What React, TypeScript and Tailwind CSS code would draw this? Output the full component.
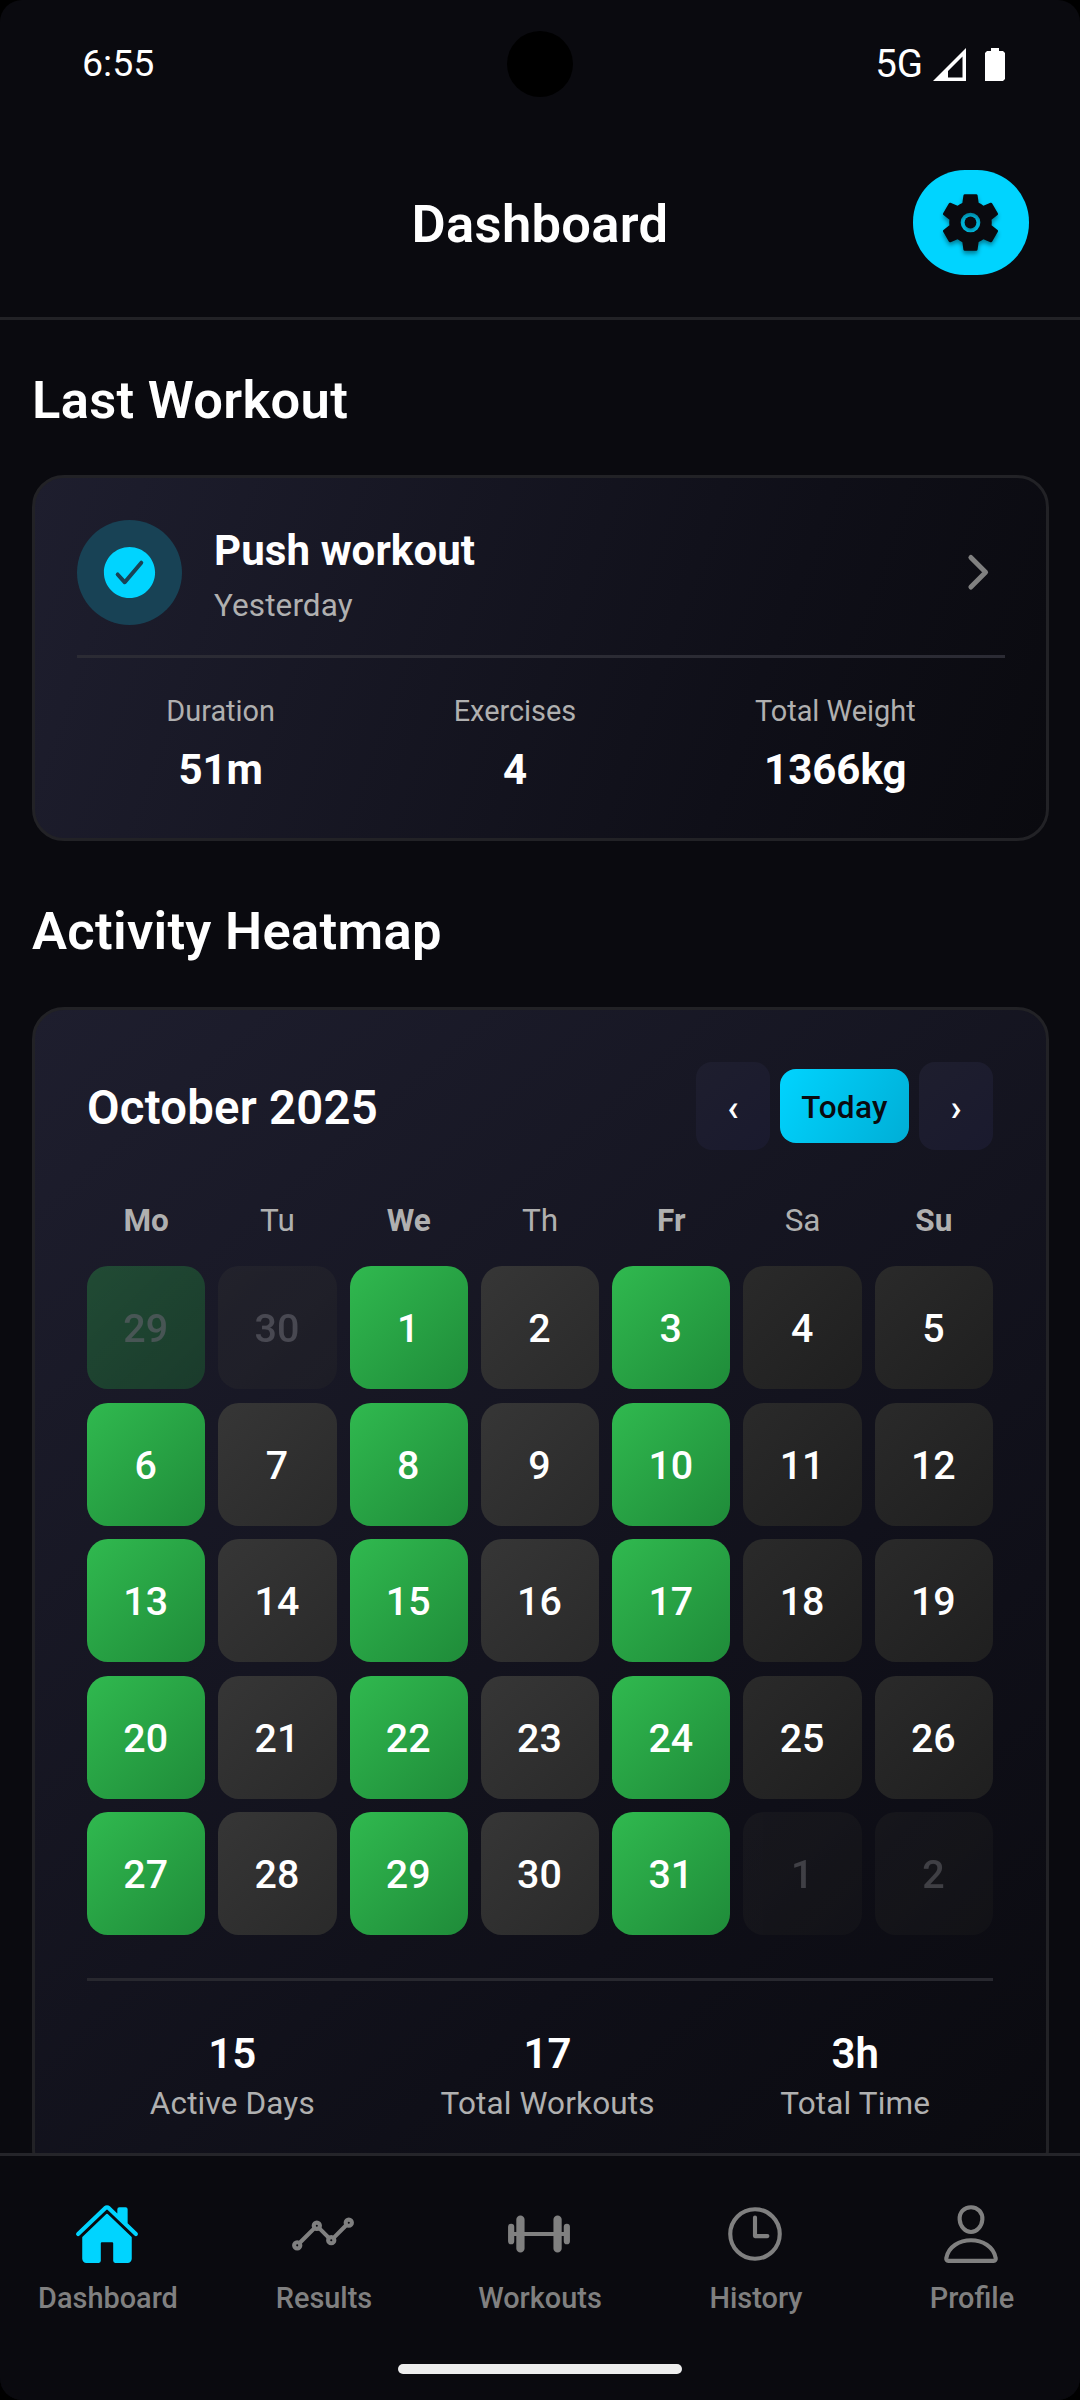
import type { ReactNode } from "react";
import {
  IoAnalyticsOutline,
  IoBarbellOutline,
  IoCheckmarkCircle,
  IoChevronForward,
  IoHome,
  IoPersonOutline,
  IoTimeOutline,
} from "react-icons/io5";

type DayKind = "active" | "rest" | "weekend";

interface Day {
  label: number;
  kind: DayKind;
  outside?: boolean;
}

const WEEKDAYS = ["Mo", "Tu", "We", "Th", "Fr", "Sa", "Su"];

// Mo, We and Fr are the training days of this plan
function buildDays(): Day[] {
  const days: Day[] = [];
  for (let i = 0; i < 35; i++) {
    const col = i % 7;
    const date = i - 1;
    let label = date;
    if (date < 1) label = date + 30;
    if (date > 31) label = date - 31;
    const kind: DayKind = col > 4 ? "weekend" : col % 2 === 0 ? "active" : "rest";
    days.push({ label, kind, outside: date < 1 || date > 31 });
  }
  return days;
}

function dayColor(kind: DayKind): string {
  switch (kind) {
    case "active": return "bg-[linear-gradient(136deg,#30b94f,#1f8b39)]";
    case "rest": return "bg-[linear-gradient(136deg,#363636,#2a2a2a)]";
    default: return "bg-[linear-gradient(136deg,#2a2a2a,#1f1f1f)]";
  }
}

function GearIcon({ className }: { className?: string }) {
  return (
    <svg className={className} viewBox="0 0 512 512" fill="currentColor">
      <circle cx="256" cy="256" r="48" />
      <path
        fillRule="evenodd"
        d="M256 176a80 80 0 1 0 80 80 80.24 80.24 0 0 0-80-80zm172.72 80a165.53 165.53 0 0 1-1.64 22.34l48.69 38.15a11.59 11.59 0 0 1 2.63 14.78l-46.06 79.52a11.64 11.64 0 0 1-14.14 4.93l-57.25-23a176.56 176.56 0 0 1-38.82 22.67l-8.56 60.78a11.93 11.93 0 0 1-11.51 9.86h-92.12a12 12 0 0 1-11.51-9.53l-8.56-60.78A169.3 169.3 0 0 1 151.05 393L93.8 416a11.64 11.64 0 0 1-14.14-4.92L33.6 331.57a11.59 11.59 0 0 1 2.63-14.78l48.69-38.15A174.58 174.58 0 0 1 83.28 256a165.53 165.53 0 0 1 1.64-22.34l-48.69-38.15a11.59 11.59 0 0 1-2.63-14.78l46.06-79.52a11.64 11.64 0 0 1 14.14-4.93l57.25 23a176.56 176.56 0 0 1 38.82-22.67l8.56-60.78A11.93 11.93 0 0 1 209.94 26h92.12a12 12 0 0 1 11.51 9.53l8.56 60.78A169.3 169.3 0 0 1 361 119l57.2-23a11.64 11.64 0 0 1 14.14 4.92l46.06 79.52a11.59 11.59 0 0 1-2.63 14.78l-48.69 38.15a174.58 174.58 0 0 1 1.64 22.63z"
      />
    </svg>
  );
}

function StatusBar() {
  return (
    <div className="relative flex h-[127px] shrink-0 items-center justify-between pt-[1px] pl-[82px] pr-[75px] text-white">
      <span className="text-[37.5px] leading-none">6:55</span>
      <div className="absolute left-[507px] top-[31px] size-[66px] rounded-full bg-black" />
      <div className="flex items-center">
        <span className="mr-[10px] text-[38.5px] leading-none">5G</span>
        <svg className="mr-[19px] h-[33px] w-[33px]" viewBox="0 0 33 33">
          <path fillRule="evenodd" fill="#fff" d="M33 0V33H0ZM29.5 8.5L15 23V29.5H29.5Z" />
        </svg>
        <svg className="h-[33px] w-[20px]" viewBox="0 0 20 33">
          <path fill="#fff" d="M6 0H14V3H18L20 5V31L18 33H0V5L2 3H6Z" />
        </svg>
      </div>
    </div>
  );
}

function Header() {
  return (
    <header className="relative flex h-[193px] shrink-0 items-center justify-center border-b-[3px] border-[#222226] pt-[5px]">
      <h1 className="text-[52.5px] leading-none font-semibold tracking-[0.3px]">Dashboard</h1>
      <button className="absolute right-[51px] top-[43px] flex h-[105px] w-[116px] items-center justify-center rounded-[52px] bg-[#00d4ff] text-[#0a0a0f]">
        <GearIcon className="mr-[1px] size-[63px] drop-shadow-[0_3px_2px_rgba(0,0,0,0.4)]" />
      </button>
    </header>
  );
}

function SectionTitle({ children }: { children: ReactNode }) {
  return <h2 className="text-[52.5px] leading-[62px] font-semibold tracking-[0.3px]">{children}</h2>;
}

function WorkoutStat({ label, value }: { label: string; value: string }) {
  return (
    <div className="flex flex-col items-center">
      <span className="text-[28.9px] leading-[34px] text-[#b0b0b0]">{label}</span>
      <span className="mt-[17px] text-[42px] leading-[50px] font-bold">{value}</span>
    </div>
  );
}

function LastWorkoutCard() {
  return (
    <div className="mt-[44px] h-[366px] rounded-[32px] border-[3px] border-[#222226] bg-[linear-gradient(109.8deg,#1e1e2e,#0f0f18_70%,#0a0a0f)] pt-[42px] pr-[41px] pl-[42px]">
      <div className="flex h-[105px] items-center">
        <div className="flex size-[105px] items-center justify-center rounded-full bg-[#184255]">
          <IoCheckmarkCircle className="size-[63px] text-[#00d4ff]" />
        </div>
        <div className="ml-[32px] flex-1 pt-[5px]">
          <p className="text-[42px] leading-[50px] font-bold tracking-[0.1px]">Push workout</p>
          <p className="mt-[11px] text-[31.5px] leading-[38px] tracking-[0.1px] text-[#b0b0b0]">Yesterday</p>
        </div>
        <IoChevronForward className="mr-[1px] size-[52.5px] text-[#808080]" />
      </div>
      <div className="mt-[30px] flex justify-around border-t-[3px] border-[#2b2b34] pt-[36px]">
        <WorkoutStat label="Duration" value="51m" />
        <WorkoutStat label="Exercises" value="4" />
        <WorkoutStat label="Total Weight" value="1366kg" />
      </div>
    </div>
  );
}

function HeatmapStat({ value, label }: { value: string; label: string }) {
  return (
    <div className="flex flex-col items-center">
      <span className="text-[42px] leading-[50px] font-semibold">{value}</span>
      <span className="text-[31.5px] leading-[50px] tracking-[0.15px] text-[#b0b0b0]">{label}</span>
    </div>
  );
}

function HeatmapCard() {
  const navButton =
    "flex h-[88px] w-[74px] items-center justify-center rounded-[16px] bg-[linear-gradient(140deg,#1e1e2e,#1a1a2e)] pt-[3px] text-[36.75px] font-semibold";
  return (
    <div className="mt-[45px] h-[1174px] shrink-0 rounded-[32px] border-[3px] border-[#222226] bg-[linear-gradient(139deg,#1e1e2e,#0f0f18_70%,#0a0a0f)] pt-[52px] pr-[53px] pl-[52px]">
      <div className="flex h-[88px] items-center justify-between">
        <h3 className="pt-[4px] text-[47.25px] font-semibold tracking-[0.25px]">October 2025</h3>
        <div className="flex items-center gap-[10px]">
          <button className={navButton}>‹</button>
          <button className="flex h-[74px] w-[129px] items-center justify-center rounded-[16px] bg-[linear-gradient(120deg,#00d4ff,#00aed6)] pt-[3px] text-[31.5px] font-medium tracking-[0.3px] text-[#0a0a0f]">
            Today
          </button>
          <button className={navButton}>›</button>
        </div>
      </div>

      <div className="mt-[52px] grid grid-cols-7 gap-x-[13px] text-center text-[31.5px] leading-[38px] text-[#b0b0b0]">
        {WEEKDAYS.map((day, i) => (
          <span key={day} className={i % 2 === 0 ? "font-bold" : ""}>{day}</span>
        ))}
      </div>

      <div className="mt-[26px] grid grid-cols-7 gap-x-[13px] gap-y-[13.5px]">
        {buildDays().map((day, i) => (
          <div
            key={i}
            className={`flex h-[123px] items-center justify-center rounded-[21px] pt-[3px] pr-[1px] text-[39.375px] font-medium ${dayColor(day.kind)} ${day.outside ? "opacity-30" : ""}`}
          >
            <span className={day.outside ? "text-white/65" : ""}>{day.label}</span>
          </div>
        ))}
      </div>

      <div className="mt-[43px] flex justify-around border-t-[3px] border-[#28282f] pt-[48px]">
        <HeatmapStat value="15" label="Active Days" />
        <HeatmapStat value="17" label="Total Workouts" />
        <HeatmapStat value="3h" label="Total Time" />
      </div>
    </div>
  );
}

const TABS = [
  { label: "Dashboard", Icon: IoHome, active: true },
  { label: "Results", Icon: IoAnalyticsOutline },
  { label: "Workouts", Icon: IoBarbellOutline },
  { label: "History", Icon: IoTimeOutline },
  { label: "Profile", Icon: IoPersonOutline },
];

function TabBar() {
  return (
    <nav className="h-[247px] shrink-0 border-t-[3px] border-[#25252a] bg-[#0a0a0f]">
      <div className="grid grid-cols-5 pt-[45px]">
        {TABS.map(({ label, Icon, active }) => (
          <div key={label} className="flex flex-col items-center text-[#808080]">
            <Icon className={`mr-[2px] size-[66px] ${active ? "text-[#00d4ff]" : ""}`} />
            <span className="mt-[13px] text-[28.9px] leading-[36px] font-medium">{label}</span>
          </div>
        ))}
      </div>
      <div className="mx-auto mt-[48px] h-[10px] w-[284px] rounded-full bg-[#ededed]" />
    </nav>
  );
}

export default function App() {
  return (
    <div className="h-[2400px] w-[1080px] bg-black">
      <div className="flex h-full flex-col overflow-hidden rounded-[22px] bg-[#0a0a0f] font-['Roboto',sans-serif] text-white">
        <StatusBar />
        <Header />
        <main className="min-h-0 flex-1 overflow-hidden pt-[49px] pr-[31px] pl-[32px]">
          <SectionTitle>Last Workout</SectionTitle>
          <LastWorkoutCard />
          <div className="mt-[59px]">
            <SectionTitle>Activity Heatmap</SectionTitle>
          </div>
          <HeatmapCard />
        </main>
        <TabBar />
      </div>
    </div>
  );
}
